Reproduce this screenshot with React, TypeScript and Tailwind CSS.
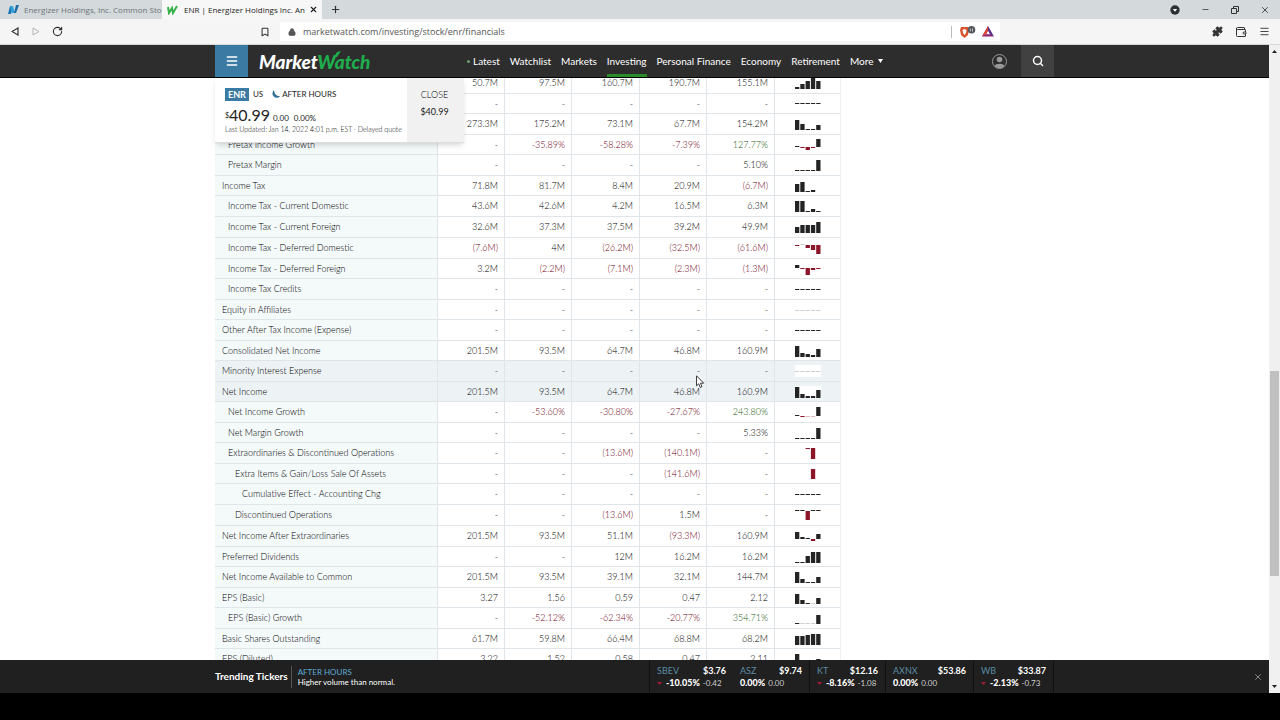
import { Bookmark, Lock, Menu, Minus, Plus, Puzzle, RotateCw, Search, Wallet, X } from 'lucide-react';
import clsx from 'clsx';

type Row = {
  label: string;
  values: string[];
  bars: number[]; // height of each bar in px, below 1 is drawn faint
  base?: number; // y of the zero line
  indent?: 1 | 2 | 3;
  hover?: boolean;
};

const DASH = ['-', '-', '-', '-', '-'];
const FLAT = [1, 1, 1, 1, 1];
const FAINT = [0.5, 0.5, 0.5, 0.5, 0.5];

const rows: Row[] = [
  { label: 'Interest Expense', values: ['50.7M', '97.5M', '160.7M', '190.7M', '155.1M'], bars: [2, 5, 8, 12, 8] },
  { label: 'Unusual Expense', values: DASH, bars: FLAT, base: 6 },
  { label: 'Pretax Income', values: ['273.3M', '175.2M', '73.1M', '67.7M', '154.2M'], bars: [10, 6, 1, 1, 5] },
  { label: 'Pretax Income Growth', indent: 1, values: ['-', '-35.89%', '-58.28%', '-7.39%', '127.77%'], bars: [1, -1, -3, -1, 8], base: 8 },
  { label: 'Pretax Margin', indent: 1, values: ['-', '-', '-', '-', '5.10%'], bars: [1, 1, 1, 1, 11] },
  { label: 'Income Tax', values: ['71.8M', '81.7M', '8.4M', '20.9M', '(6.7M)'], bars: [8, 10, 1, 2, 0] },
  { label: 'Income Tax - Current Domestic', indent: 1, values: ['43.6M', '42.6M', '4.2M', '16.5M', '6.3M'], bars: [11, 11, 1, 3, 1] },
  { label: 'Income Tax - Current Foreign', indent: 1, values: ['32.6M', '37.3M', '37.5M', '39.2M', '49.9M'], bars: [6, 8, 8, 8, 11] },
  { label: 'Income Tax - Deferred Domestic', indent: 1, values: ['(7.6M)', '4M', '(26.2M)', '(32.5M)', '(61.6M)'], bars: [-1, 0.5, -3, -5, -9], base: 3 },
  { label: 'Income Tax - Deferred Foreign', indent: 1, values: ['3.2M', '(2.2M)', '(7.1M)', '(2.3M)', '(1.3M)'], bars: [3, -1, -7, -2, -1], base: 5 },
  { label: 'Income Tax Credits', indent: 1, values: DASH, bars: FLAT, base: 7 },
  { label: 'Equity in Affiliates', values: DASH, bars: FAINT, base: 7 },
  { label: 'Other After Tax Income (Expense)', values: DASH, bars: FLAT, base: 7 },
  { label: 'Consolidated Net Income', values: ['201.5M', '93.5M', '64.7M', '46.8M', '160.9M'], bars: [11, 4, 3, 2, 8] },
  { label: 'Minority Interest Expense', values: DASH, bars: FAINT, base: 7, hover: true },
  { label: 'Net Income', values: ['201.5M', '93.5M', '64.7M', '46.8M', '160.9M'], bars: [11, 4, 2, 2, 8], hover: true },
  { label: 'Net Income Growth', indent: 1, values: ['-', '-53.60%', '-30.80%', '-27.67%', '243.80%'], bars: [1, -1, -0.5, -0.5, 9], base: 10 },
  { label: 'Net Margin Growth', indent: 1, values: ['-', '-', '-', '-', '5.33%'], bars: [1, 1, 1, 1, 11] },
  { label: 'Extraordinaries & Discontinued Operations', indent: 1, values: ['-', '-', '(13.6M)', '(140.1M)', '-'], bars: [0, 0, -1, -11, 0], base: 1 },
  { label: 'Extra Items & Gain/Loss Sale Of Assets', indent: 2, values: ['-', '-', '-', '(141.6M)', '-'], bars: [0, 0, 0, -10, 0], base: 1 },
  { label: 'Cumulative Effect - Accounting Chg', indent: 3, values: DASH, bars: FLAT, base: 7 },
  { label: 'Discontinued Operations', indent: 2, values: ['-', '-', '(13.6M)', '1.5M', '-'], bars: [1, 1, -9, 1, 1], base: 2 },
  { label: 'Net Income After Extraordinaries', values: ['201.5M', '93.5M', '51.1M', '(93.3M)', '160.9M'], bars: [7, 2, 1, -2, 5], base: 9 },
  { label: 'Preferred Dividends', values: ['-', '-', '12M', '16.2M', '16.2M'], bars: [1, 1, 7, 11, 11] },
  { label: 'Net Income Available to Common', values: ['201.5M', '93.5M', '39.1M', '32.1M', '144.7M'], bars: [11, 4, 1, 1, 6] },
  { label: 'EPS (Basic)', values: ['3.27', '1.56', '0.59', '0.47', '2.12'], bars: [10, 4, 1, 0.5, 6] },
  { label: 'EPS (Basic) Growth', indent: 1, values: ['-', '-52.12%', '-62.34%', '-20.77%', '354.71%'], bars: [1, 0.5, 0.5, 0.5, 9] },
  { label: 'Basic Shares Outstanding', values: ['61.7M', '59.8M', '66.4M', '68.8M', '68.2M'], bars: [9, 9, 10, 11, 11] },
  { label: 'EPS (Diluted)', values: ['3.22', '1.52', '0.58', '0.47', '2.11'], bars: [11, 4, 1, 1, 6] },
];

const navItems = ['Latest', 'Watchlist', 'Markets', 'Investing', 'Personal Finance', 'Economy', 'Retirement'];

const tickers = [
  { symbol: 'SBEV', price: '$3.76', pct: '-10.05%', change: '-0.42', width: 'w-[83px]' },
  { symbol: 'ASZ', price: '$9.74', pct: '0.00%', change: '0.00', width: 'w-[77px] border-r' },
  { symbol: 'KT', price: '$12.16', pct: '-8.16%', change: '-1.08', width: 'w-[76px] border-r' },
  { symbol: 'AXNX', price: '$53.86', pct: '0.00%', change: '0.00', width: 'w-[88px] border-r' },
  { symbol: 'WB', price: '$33.87', pct: '-2.13%', change: '-0.73', width: 'w-[80px] border-r' },
];

const indents = ['pl-[7px]', 'pl-[13px]', 'pl-[20px]', 'pl-[27px]'];

function Sparkline({ bars, base = 12, white }: { bars: number[]; base?: number; white?: boolean }) {
  return (
    <svg width="26" height="12" className={clsx('mx-auto block overflow-visible', white && 'bg-white')}>
      {bars.map((v, i) => {
        if (v === 0) return null;
        const h = Math.max(1, Math.abs(v));
        const faint = Math.abs(v) < 1;
        const fill = v < 0 ? (faint ? '#e3b5bc' : '#8c1528') : faint ? '#cfcfcf' : '#242424';
        return <rect key={i} x={i * 5.3} y={v < 0 ? base : base - h} width="4.3" height={h} fill={fill} />;
      })}
    </svg>
  );
}

function valueColor(row: Row, value: string) {
  if (value.startsWith('(') || (value.startsWith('-') && value.length > 1)) return 'text-[#6e0015]';
  if (row.label.endsWith('Growth') && value.endsWith('%') && row.label !== 'Net Margin Growth') return 'text-[#1d5a12]';
  return 'text-black';
}

/* ── Browser window ── */
function BrowserChrome() {
  return (
    <header className="shrink-0 font-['Open_Sans',sans-serif] text-[#333]">
      <div className="flex h-[19px] items-center bg-[#d4d9dc]">
        <button className="flex h-full w-[162px] items-center gap-[5px] pr-1 pl-2 text-[8px] whitespace-nowrap text-[#6d7377]">
          <svg width="11" height="9" viewBox="0 0 11 9" className="shrink-0">
            <path d="M0 9 2 1h3L3 9z" fill="#1c78b4" />
            <path d="M2 1h3l2 7H4z" fill="#31a3d8" />
            <path d="M6 8 8 0h3L8 8z" fill="#1c6ba5" />
          </svg>
          Energizer Holdings, Inc. Common Sto
        </button>
        <div className="flex h-full w-[160px] items-center bg-[#f7f7f7] pr-1 pl-[5px] text-[8px] text-[#1d1d1d]">
          <button className="flex min-w-0 flex-1 items-center gap-[6px] overflow-hidden whitespace-nowrap">
            <svg width="11" height="10" viewBox="0 0 11 10" className="shrink-0" fill="none" stroke="#35b34a" strokeWidth="2">
              <path d="M1 2l1 6 3-5 1 5 4-7" />
            </svg>
            ENR | Energizer Holdings Inc. An
          </button>
          <button aria-label="Close tab" className="pl-1"><X size={9} strokeWidth={3} /></button>
        </div>
        <button aria-label="New tab" className="ml-2"><Plus size={11} strokeWidth={2.5} /></button>
        <div className="ml-auto flex items-center gap-[21px] pr-[10px]">
          <svg width="10" height="10" viewBox="0 0 10 10">
            <circle cx="5" cy="5" r="4.7" fill="#2b2f31" />
            <path d="M2.8 4h4.4L5 6.8z" fill="#fff" />
          </svg>
          <button aria-label="Minimize"><Minus size={9} strokeWidth={2} /></button>
          <button aria-label="Restore">
            <svg width="8" height="8" viewBox="0 0 8 8" fill="none" stroke="#333">
              <path d="M.5 2.5h5v5h-5zM2.5 2V.5h5v5H6" />
            </svg>
          </button>
          <button aria-label="Close"><X size={10} strokeWidth={2} /></button>
        </div>
      </div>
      <div className="flex h-[26px] items-center border-b border-[#d8d8d8] bg-[#f5f5f5]">
        <div className="flex w-[280px] items-center pr-[10px] pl-[11px]">
          <button aria-label="Back">
            <svg width="8" height="9" viewBox="0 0 8 9" fill="none" stroke="#333" strokeWidth="1.2"><path d="M7 1v7L1 4.5z" /></svg>
          </button>
          <button aria-label="Forward" className="ml-[13px]">
            <svg width="8" height="9" viewBox="0 0 8 9" fill="none" stroke="#b5b5b5"><path d="M1 1v7l6-3.5z" /></svg>
          </button>
          <button aria-label="Reload" className="ml-3"><RotateCw size={11} strokeWidth={2.5} /></button>
          <button aria-label="Bookmark" className="ml-auto"><Bookmark size={10} strokeWidth={2.5} /></button>
        </div>
        <div className="flex h-[19px] w-[720px] items-center bg-white pl-2">
          <Lock size={8} strokeWidth={2.5} className="mr-[7px] fill-[#555] text-[#555]" />
          <input
            aria-label="Address"
            className="flex-1 text-[9px] text-[#555] outline-none"
            defaultValue="marketwatch.com/investing/stock/enr/financials"
          />
          <div className="mr-[6px] flex items-center gap-[6px] border-l border-[#bbb] pl-[7px]">
            <svg width="17" height="12" viewBox="0 0 17 12">
              <path d="M2 1h7l1 3-1 5-3.5 3L2 9 1 4z" fill="#d9532c" />
              <path d="M3.5 4 5.5 3l2 1-.5 3-1.5 2L4 7z" fill="#fff" />
              <circle cx="12.5" cy="3.8" r="3.8" fill="#53565c" />
              <path d="M11.3 2.5v3M13.5 2.5v3" stroke="#ddd" strokeWidth=".8" />
            </svg>
            <svg width="12" height="11" viewBox="0 0 12 11">
              <path d="M6 0 0 10.5h12L9 8.2H4.2L6 4.5z" fill="#8a2473" />
              <path d="M6 0v4.5l2 3.7 4 2.3z" fill="#5a2b86" />
              <path d="M6 0 0 10.5l4.2-2.3L6 4.5z" fill="#e04a38" />
            </svg>
          </div>
        </div>
        <div className="ml-auto flex items-center gap-[12px] pr-[10px]">
          <Puzzle size={11} className="fill-[#333]" />
          <Wallet size={12} strokeWidth={2} />
          <Menu size={11} strokeWidth={2} />
        </div>
      </div>
    </header>
  );
}

function SiteHeader() {
  return (
    <div className="h-[33px] shrink-0 border-b border-black bg-[#2d2d2d]">
      <div className="mx-auto flex h-full max-w-[839px] items-center text-white">
        <button aria-label="Menu" className="flex h-full w-[33px] items-center justify-center bg-[#3a7aa3]">
          <Menu size={14} strokeWidth={2.5} />
        </button>
        <a href="#home" className="relative ml-[11px] w-[115px] text-[19px] leading-none font-black whitespace-nowrap italic">
          Market<span className="text-[#1fae4d]">Watch</span>
          {/* tick rising out of the W */}
          <svg width="8" height="6" viewBox="0 0 8 6" className="absolute -top-[1px] left-[74px]">
            <path d="M1 6 4 1l4-1-4 6z" fill="#1fae4d" />
          </svg>
        </a>
        <nav className="ml-[93px] flex h-full items-center gap-[10px] text-[10px]">
          {navItems.map(item => (
            <a
              key={item}
              href="#nav"
              className={clsx(
                'flex h-full items-center border-b-[3px] border-transparent pt-1 whitespace-nowrap',
                item === 'Investing' && 'border-b-[#2b8a2b]'
              )}
            >
              {item === 'Latest' && <span className="mr-[3px] size-[3px] rounded-full bg-[#6fa070]" />}
              {item}
            </a>
          ))}
          <button className="flex items-center gap-[5px]">
            More
            <svg width="5" height="4"><path d="M0 0h5L2.5 4z" fill="#fff" /></svg>
          </button>
        </nav>
        <button aria-label="Account" className="mr-[14px] ml-auto">
          <svg width="15" height="15" viewBox="0 0 15 15">
            <circle cx="7.5" cy="7.5" r="7" fill="none" stroke="#999" />
            <circle cx="7.5" cy="5.5" r="2.8" fill="#999" />
            <path d="M2.5 12c1-3 9-3 10 0-2.5 3-7.5 3-10 0z" fill="#999" />
          </svg>
        </button>
        <button aria-label="Search" className="flex h-full w-[33px] items-center justify-center bg-[#414141]">
          <Search size={12} strokeWidth={3} />
        </button>
      </div>
    </div>
  );
}

function QuoteCard() {
  return (
    <div className="absolute top-0 left-0 flex h-[65px] w-[249px] border-b border-[#ddd] bg-white text-[#222] shadow-md">
      <div className="min-w-0 flex-1 pt-[9px] pl-[10px]">
        <div className="flex h-[14px] items-center text-[8px]">
          <span className="bg-[#3a7aa3] px-[3px] text-[9px] leading-[13px] font-bold text-white">ENR</span>
          <span className="ml-1">US</span>
          <svg width="8" height="8" viewBox="0 0 8 8" className="mr-[2px] ml-[9px]">
            <path d="M2 0C0 2 0 5 2 6.8 4 8.4 7 8 8 6 5 6.6 2.2 4 2 0z" fill="#2f6f98" />
          </svg>
          AFTER HOURS
        </div>
        <div className="mt-[5px] flex h-[18px] items-baseline">
          <sup className="text-[7px]">$</sup>
          <span className="text-[16px] leading-[18px]">40.99</span>
          <span className="ml-[3px] text-[8px]">0.00</span>
          <span className="ml-[5px] text-[8px]">0.00%</span>
        </div>
        <p className="text-[7px] leading-[10px] font-light whitespace-nowrap text-black">
          Last Updated: Jan 14, 2022 4:01 p.m. EST · Delayed quote
        </p>
      </div>
      <div className="w-[57px] bg-[#f1f1f1] pr-[2px] pt-[11px] text-center text-[9px] leading-[12px]">
        <div className="font-light text-black">CLOSE</div>
        <div className="mt-[5px]">$40.99</div>
      </div>
    </div>
  );
}

function FinancialsTable() {
  return (
    <table className="-mt-[5px] w-[626px] table-fixed border-separate border-spacing-0 text-[9px] leading-[12px] font-light text-black">
      <colgroup>
        <col className="w-[223px]" />
        <col className="w-[67px]" />
        <col className="w-[67px]" />
        <col className="w-[68px]" />
        <col className="w-[67px]" />
        <col className="w-[68px]" />
        <col />
      </colgroup>
      <tbody>
        {rows.map((row, r) => (
          <tr key={row.label} className={clsx(r % 2 && r % 14 !== 7 ? 'h-[20px]' : 'h-[21px]', row.hover && 'bg-[#edf2f5]')}>
            <th
              scope="row"
              className={clsx(
                'border-r border-b border-[#dfe5e8] py-0 text-left font-light whitespace-nowrap',
                !row.hover && 'bg-[#f4f9fa]',
                indents[row.indent ?? 0]
              )}
            >
              {row.label}
            </th>
            {row.values.map((value, i) => (
              <td key={i} className={clsx('border-r border-b border-[#dfe5e8] py-0 pr-[6px] text-right', valueColor(row, value))}>
                {value}
              </td>
            ))}
            <td className="border-r border-b border-[#dfe5e8] border-r-[#eef0f1] p-0">
              <Sparkline bars={row.bars} base={row.base} white={row.hover} />
            </td>
          </tr>
        ))}
      </tbody>
    </table>
  );
}

function TrendingBar() {
  return (
    <footer className="relative h-[33px] shrink-0 bg-[#202020] text-white">
      <div className="mx-auto flex h-full max-w-[839px] items-center">
        <h2 className="text-[10px] font-bold whitespace-nowrap">Trending Tickers</h2>
        <div className="ml-[3px] border-l border-[#555] py-px pl-[6px] text-[8px] leading-[10px]">
          <div className="text-[#5fa8d3]">AFTER HOURS</div>
          <div>Higher volume than normal.</div>
        </div>
        <ul className="ml-auto flex h-full border-l border-[#111]">
          {tickers.map(t => (
            <li key={t.symbol} className={clsx('border-[#111] px-[7px] pt-[5px] text-[9px] leading-[12px]', t.width)}>
              <div className="flex justify-between">
                <a href="#quote" className="text-[#5a8ba5]">{t.symbol}</a>
                <span className="font-bold">{t.price}</span>
              </div>
              <div className="flex items-center gap-[3px] whitespace-nowrap">
                {t.pct.startsWith('-') && <svg width="5" height="3" className="mr-px"><path d="M0 0h5L2.5 3z" fill="#a01c30" /></svg>}
                <span className="font-black">{t.pct}</span>
                <span className="text-[8px] text-[#ccc]">{t.change}</span>
              </div>
            </li>
          ))}
        </ul>
      </div>
      <button aria-label="Dismiss" className="absolute top-[12px] right-[6px] text-[#999]"><X size={10} strokeWidth={2} /></button>
    </footer>
  );
}

export default function App() {
  return (
    <div className="flex h-screen flex-col overflow-hidden bg-black pb-[27px] font-['Lato',sans-serif]">
      <BrowserChrome />
      <div className="flex min-h-0 flex-1">
        <div className="flex min-w-0 flex-1 flex-col">
          <SiteHeader />
          <main className="min-h-0 flex-1 overflow-hidden bg-white">
            <div className="relative mx-auto flow-root max-w-[839px]">
              <FinancialsTable />
              <QuoteCard />
              <svg width="9" height="14" viewBox="0 0 9 14" className="absolute top-[297px] left-[481px]">
                <path d="M.5.8v10l2.3-2 1.5 3.7 1.7-.8-1.5-3.5h3.2z" fill="#fff" stroke="#111" strokeWidth=".8" />
              </svg>
            </div>
          </main>
          <TrendingBar />
        </div>
        {/* Scrollbar */}
        <div className="flex w-[11px] flex-col items-center bg-[#f0f0f0] py-[5px]">
          <svg width="5" height="3"><path d="M0 3h5L2.5 0z" fill="#222" /></svg>
          <div className="grow-[318]" />
          <div className="w-[9px] grow-[205] bg-[#c0c0c0]" />
          <div className="grow-[109]" />
          <svg width="5" height="3"><path d="M0 0h5L2.5 3z" fill="#222" /></svg>
        </div>
      </div>
    </div>
  );
}
